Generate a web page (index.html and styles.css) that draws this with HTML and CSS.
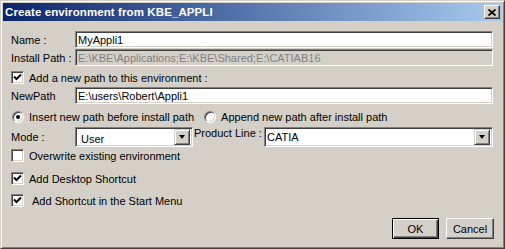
FILE: index.html
```html
<!DOCTYPE html>
<html lang="en">
<head>
  <meta charset="UTF-8">
  <title>Create environment from KBE_APPLI</title>
  <link rel="stylesheet" href="styles.css">
</head>
<body>

  <div class="window">
    <div class="titlebar">
      <span class="title">Create environment from KBE_APPLI</span>
      <button type="button" class="close">
        <svg width="8" height="7" viewBox="0 0 8 7"><path d="M0.5 0.5 L7.5 6.5 M7.5 0.5 L0.5 6.5" stroke="#000" stroke-width="1.8" fill="none"/></svg>
      </button>
    </div>

    <form class="content" id="env-form">
      <div class="row r-name">
        <label class="lbl" for="name">Name :</label>
        <input class="field" id="name" value="MyAppli1">
      </div>
      <div class="row r-install">
        <label class="lbl" for="install">Install Path :</label>
        <input class="field disabled" id="install" value="E:\KBE\Applications;E:\KBE\Shared;E:\CATIAB16" disabled>
      </div>
      <div class="row r-add">
        <span class="check"><svg width="9" height="9" viewBox="0 0 9 9"><path d="M1 3.5 L3.5 6 L8 1.5" stroke="#000" stroke-width="2" fill="none"/></svg></span>
        <span class="ctext">Add a new path to this environment :</span>
      </div>
      <div class="row r-newpath">
        <label class="lbl" for="newpath">NewPath</label>
        <input class="field" id="newpath" value="E:\users\Robert\Appli1">
      </div>
      <div class="row r-radio">
        <span class="radio on"></span>
        <span class="rtext">Insert new path before install path</span>
        <span class="radio"></span>
        <span class="rtext">Append new path after install path</span>
      </div>
      <div class="row r-select">
        <span class="lbl">Mode :</span>
        <div class="select mode"><span class="value">User</span><span class="arrow"></span></div>
        <span class="lbl2">Product Line :</span>
        <div class="select product"><span class="value">CATIA</span><span class="arrow"></span></div>
      </div>
      <div class="row r-overwrite">
        <span class="check"></span>
        <span class="ctext">Overwrite existing environment</span>
      </div>
      <div class="row r-desktop">
        <span class="check"><svg width="9" height="9" viewBox="0 0 9 9"><path d="M1 3.5 L3.5 6 L8 1.5" stroke="#000" stroke-width="2" fill="none"/></svg></span>
        <span class="ctext">Add Desktop Shortcut</span>
      </div>
      <div class="row r-start">
        <span class="check"><svg width="9" height="9" viewBox="0 0 9 9"><path d="M1 3.5 L3.5 6 L8 1.5" stroke="#000" stroke-width="2" fill="none"/></svg></span>
        <span class="ctext wide">Add Shortcut in the Start Menu</span>
      </div>
      <div class="actions">
        <button type="button" class="btn default">OK</button>
        <button type="button" class="btn">Cancel</button>
      </div>
    </form>
  </div>

</body>
</html>
```

FILE: styles.css
```css
* { box-sizing:border-box; }
body { margin:0; font-family:"Liberation Sans", Arial, sans-serif; font-size:11px; color:#000; background:#d4d0c8; }

.window { width:505px; height:249px; background:#d4d0c8; padding:2px; border:1px solid; border-color:#d4d0c8 #404040 #404040 #d4d0c8; box-shadow:inset 1px 1px #fff, inset -1px -1px #808080; display:flex; flex-direction:column; }

.titlebar { height:18px; display:flex; align-items:center; padding-left:2px; padding-right:2px; background:linear-gradient(to right, #0a246a, #a6caf0); }
.title { flex:1; color:#fff; font-weight:bold; font-size:11.5px; letter-spacing:0.1px; }
.close { width:16px; height:14px; padding:0; display:flex; align-items:center; justify-content:center; background:#d4d0c8; border:1px solid; border-color:#fff #404040 #404040 #fff; box-shadow:inset -1px -1px #808080; }

.content { display:flex; flex-direction:column; padding:0 9px 0 8px; }
.row { display:flex; align-items:center; }
.lbl { width:64px; flex-shrink:0; }

.field { flex:1; height:17px; margin:0; padding:0 0 0 2px; font:inherit; color:#000; background:#fff; border:1px solid; border-color:#808080 #fff #fff #808080; box-shadow:inset 1px 1px #404040, inset -1px -1px #d4d0c8; outline:none; }
.field.disabled { background:#d4d0c8; color:#808080; }

.r-name { margin-top:10px; }
.r-install { margin-top:1px; }
.r-add { margin-top:5px; height:13px; }
.r-newpath { margin-top:3px; }
.r-radio { margin-top:6px; height:13px; padding-left:1px; }
.r-select { margin-top:4px; height:20px; }
.r-overwrite { margin-top:2px; height:13px; }
.r-desktop { margin-top:10px; height:13px; }
.r-start { margin-top:9px; height:13px; }

.check { width:13px; height:13px; flex-shrink:0; display:flex; align-items:center; justify-content:center; background:#fff; border:1px solid; border-color:#808080 #fff #fff #808080; box-shadow:inset 1px 1px #404040, inset -1px -1px #d4d0c8; }
.ctext { margin-left:5px; }
.ctext.wide { margin-left:8px; }

.radio { width:12px; height:12px; flex-shrink:0; border-radius:50%; background:#fff; border:1px solid; border-color:#808080 #fff #fff #808080; box-shadow:inset 1px 1px #404040, inset -1px -1px #d4d0c8; position:relative; }
.radio.on::after { content:""; position:absolute; left:3px; top:3px; width:4px; height:4px; border-radius:50%; background:#000; }
.rtext { margin-left:5px; margin-right:10px; }

.select { height:20px; display:flex; align-items:center; background:#fff; border:1px solid; border-color:#808080 #fff #fff #808080; box-shadow:inset 1px 1px #404040, inset -1px -1px #d4d0c8; padding:2px; }
.select .value { flex:1; }
.select.mode { width:118px; }
.select.mode .value { padding:3px 0 0 3px; }
.select.product { flex:1; }
.arrow { width:16px; height:16px; background:#d4d0c8; border:1px solid; border-color:#d4d0c8 #404040 #404040 #d4d0c8; box-shadow:inset 1px 1px #fff, inset -1px -1px #808080; display:flex; align-items:center; justify-content:center; }
.arrow::after { content:""; width:0; height:0; border-left:3.5px solid transparent; border-right:3.5px solid transparent; border-top:4px solid #000; }
.lbl2 { width:71px; padding-left:1px; flex-shrink:0; align-self:flex-start; }

.actions { display:flex; justify-content:flex-end; gap:7px; margin-top:11px; margin-right:-1px; }
.btn { width:48px; height:21px; padding:0; font:inherit; color:#000; background:#d4d0c8; border:1px solid; border-color:#fff #404040 #404040 #fff; box-shadow:inset -1px -1px #808080; }
.btn.default { width:47px; border:1px solid #000; box-shadow:inset 1px 1px #fff, inset -1px -1px #404040, inset -2px -2px #808080; }
```
